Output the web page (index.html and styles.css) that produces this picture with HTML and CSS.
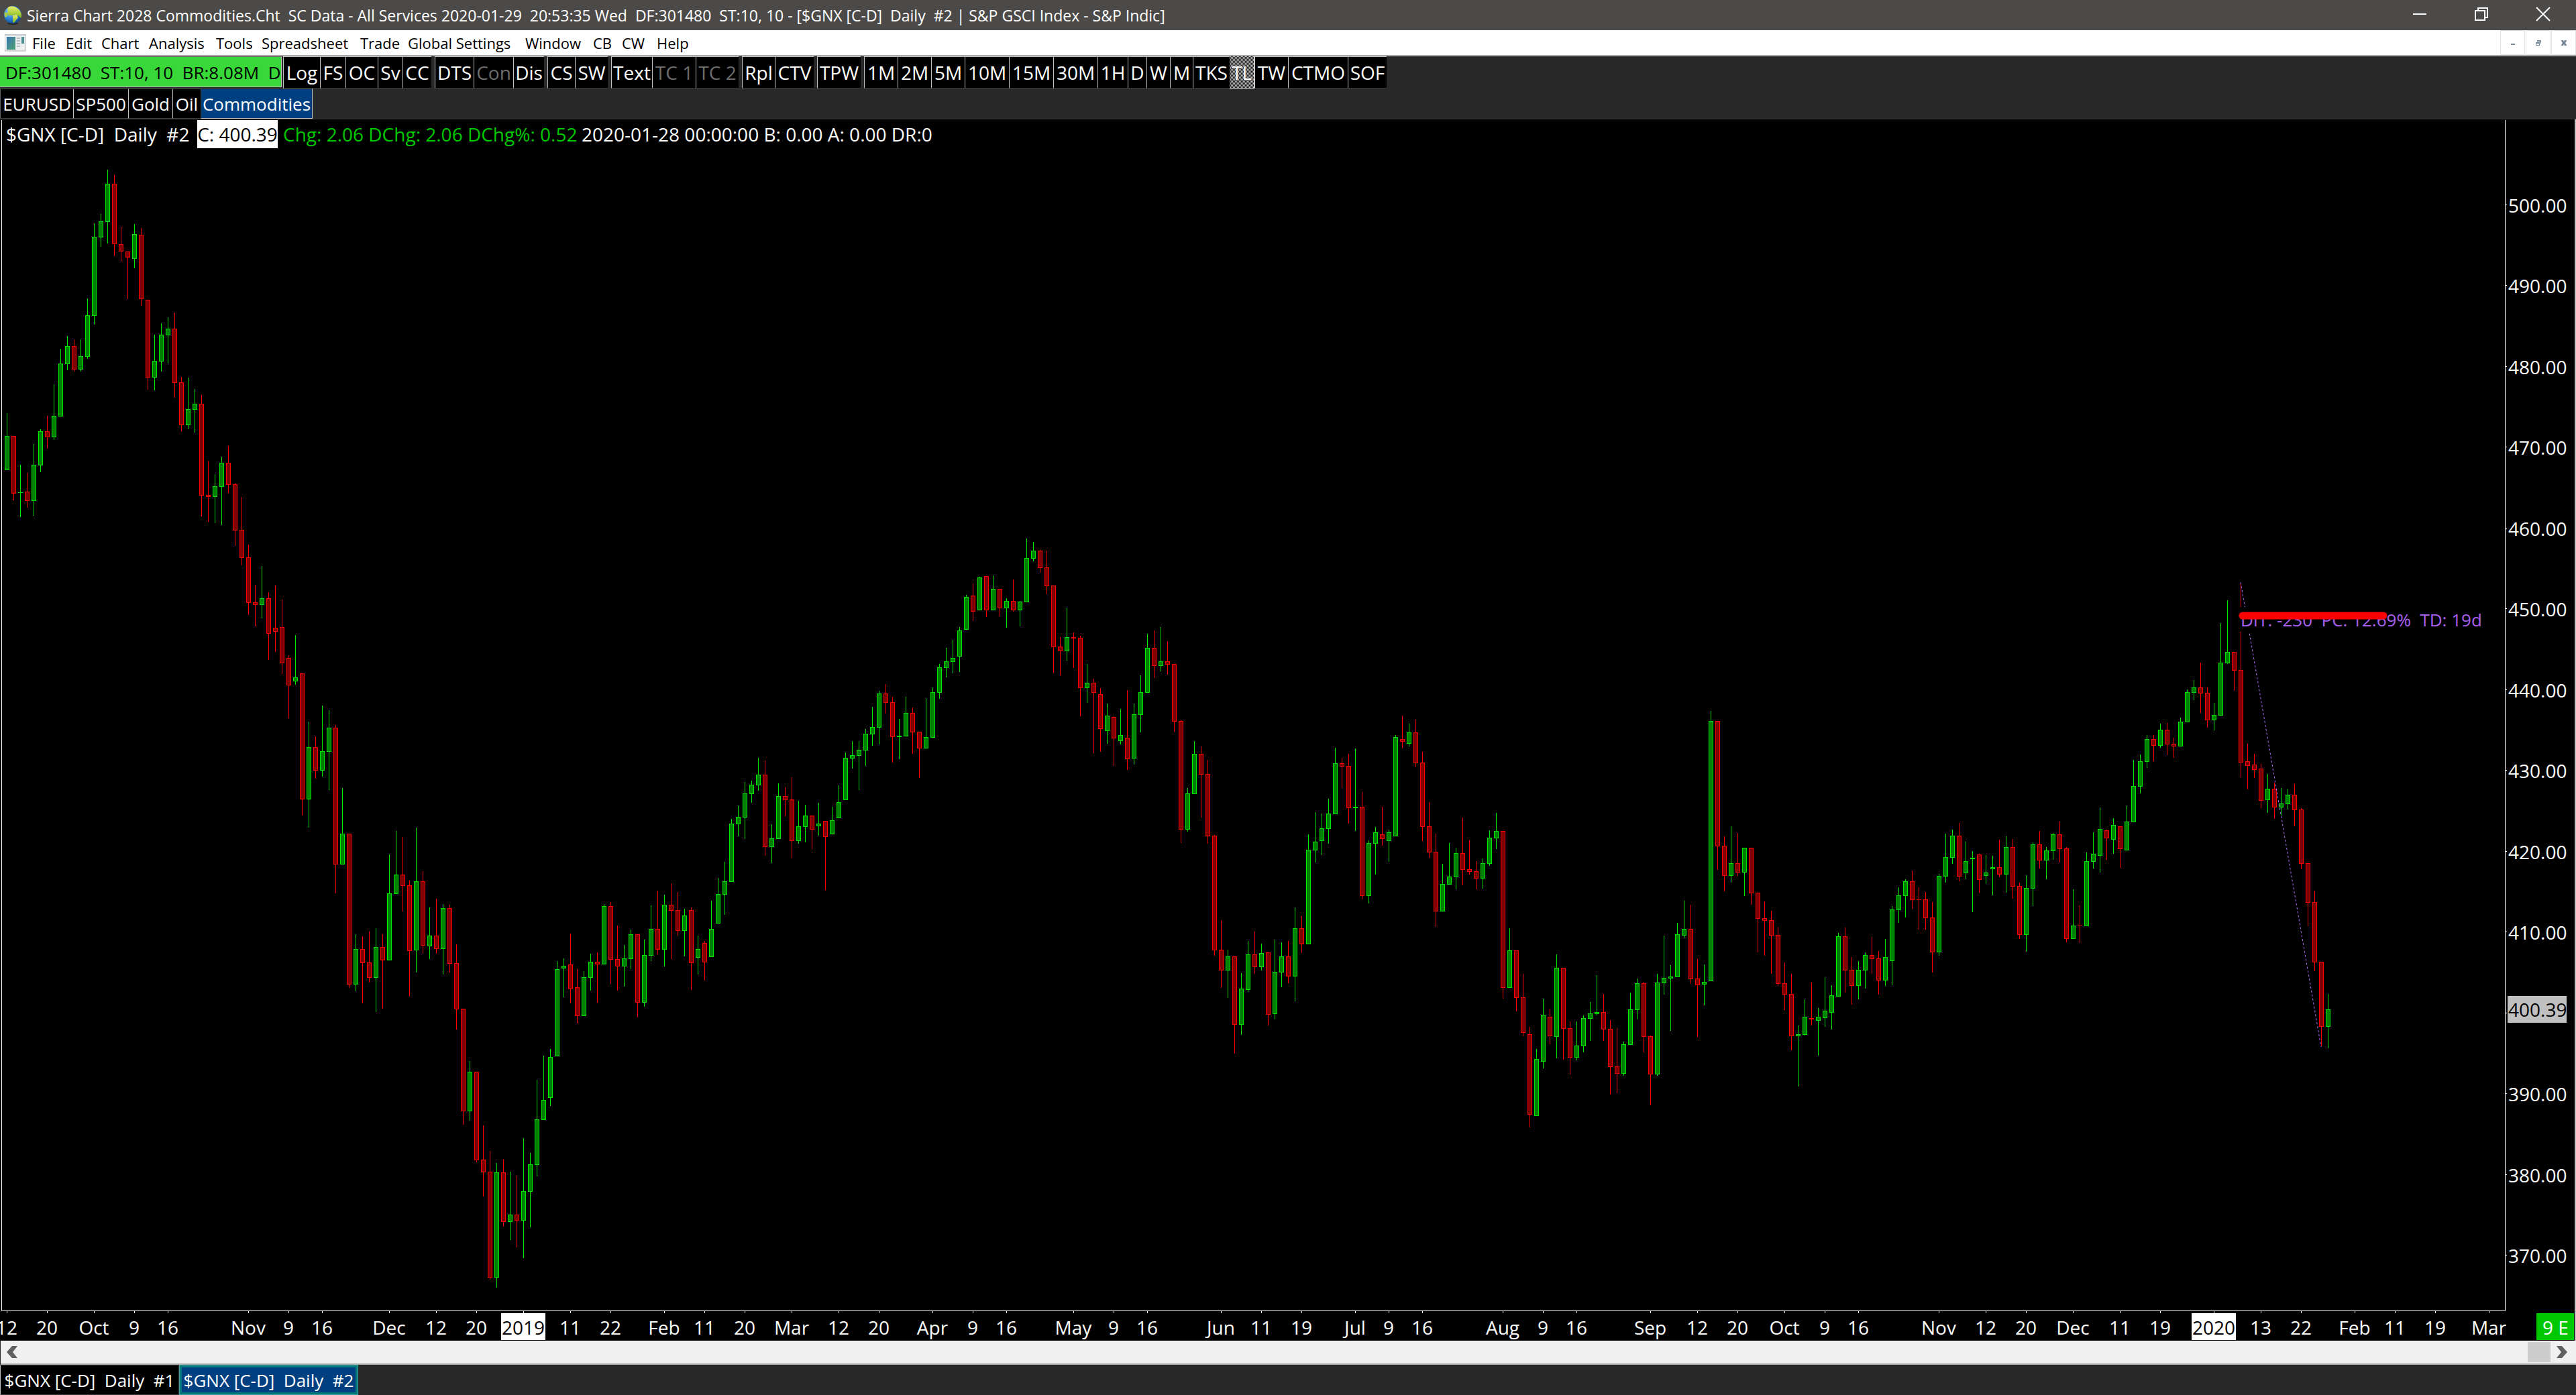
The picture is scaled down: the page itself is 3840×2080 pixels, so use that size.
FILE: index.html
```html
<!DOCTYPE html>
<html lang="en">
<head>
<meta charset="utf-8">
<title>Sierra Chart 2028 Commodities.Cht</title>
<link rel="stylesheet" href="styles.css">
</head>
<body>
<header class="titlebar">
  <svg class="globe" viewBox="0 0 28 30" aria-hidden="true">
    <defs>
      <radialGradient id="sea" cx="0.35" cy="0.3" r="0.8">
        <stop offset="0" stop-color="#9fd8ff"/><stop offset="0.5" stop-color="#2f86d8"/><stop offset="1" stop-color="#0b3f8c"/>
      </radialGradient>
      <linearGradient id="land" x1="0" y1="0" x2="0" y2="1">
        <stop offset="0" stop-color="#e8ef6a"/><stop offset="1" stop-color="#7cb51c"/>
      </linearGradient>
    </defs>
    <ellipse cx="14" cy="27" rx="8" ry="2" fill="#2c2a28"/>
    <circle cx="14" cy="14" r="13" fill="url(#sea)"/>
    <path d="M7 3c5-3 13-1 17 4 3 4 4 8 2 12l-4-4-2 1-3-2-4 1-6 0-2-3 2-3-1-3z" fill="url(#land)"/>
    <path d="M14 15l6-1 2 4-3 4-3 4-2-1 0-6z" fill="url(#land)"/>
    <path d="M2 10l3 1 1 5-3 2c-1-2-2-5-1-8z" fill="#a9cf3c"/>
  </svg>
  <h1 class="title">Sierra Chart 2028 Commodities.Cht  SC Data - All Services 2020-01-29  20:53:35 Wed  DF:301480  ST:10, 10 - [$GNX [C-D]  Daily  #2 | S&amp;P GSCI Index - S&amp;P Indic]</h1>
  <div class="window-controls">
    <button aria-label="Minimize"><svg viewBox="0 0 20 20"><path d="M0 10h20" /></svg></button>
    <button aria-label="Restore"><svg viewBox="0 0 20 20"><path d="M1 5h14v14H1zM5 5V1h14v14h-4" /></svg></button>
    <button aria-label="Close"><svg viewBox="0 0 20 20"><path d="M0 0l20 20M20 0L0 20" /></svg></button>
  </div>
</header>

<nav class="menubar">
  <svg class="doc-icon" viewBox="0 0 32 26" aria-hidden="true">
    <defs><linearGradient id="pane" x1="0" y1="0" x2="1" y2="1"><stop offset="0" stop-color="#3a78b4"/><stop offset="1" stop-color="#4fa070"/></linearGradient></defs>
    <path d="M0 0h31v25H0z" fill="#eceef0" stroke="#b0b4b8"/>
    <path d="M0 0h31v2H0z" fill="#c4c8d0"/>
    <path d="M3 4h13v19H3z" fill="url(#pane)"/>
    <path d="M18 6h5M18 10h5M18 14h5M18 18h5" stroke="#8a8e94"/>
    <path d="M25 4h4v10h-4z" fill="#4c8f90"/>
  </svg>
  <div class="menus">
    <button>File</button><button>Edit</button><button>Chart</button><button>Analysis</button><button>Tools</button><button>Spreadsheet</button><button>Trade</button><button>Global Settings</button><button>Window</button><button>CB</button><button>CW</button><button>Help</button>
  </div>
  <div class="mdi-controls">
    <button aria-label="Minimize chart"><svg viewBox="0 0 10 10"><path d="M2 6h6v2H2z"/></svg></button>
    <button aria-label="Restore chart"><svg viewBox="0 0 10 10"><path d="M3 1h6v5H8V3H3zM1 4h6v5H1zM2 6v2h4V6z" fill-rule="evenodd"/></svg></button>
    <button aria-label="Close chart"><svg viewBox="0 0 10 10"><path d="M1 1h3l1 2 1-2h3v1L7 5l2 3v1H6L5 7 4 9H1V8l2-3-2-3z"/></svg></button>
  </div>
</nav>

<section class="toolbars">
  <div class="bar bar-main">
    <div class="status">DF:301480  ST:10, 10  BR:8.08M  D</div><i></i>
    <button>Log</button><button>FS</button><button>OC</button><button>Sv</button><button>CC</button><i></i>
    <button>DTS</button><button disabled>Con</button><button>Dis</button><i></i>
    <button>CS</button><button>SW</button><i></i>
    <button>Text</button><button disabled>TC 1</button><button disabled>TC 2</button><i></i>
    <button>Rpl</button><button>CTV</button><i></i>
    <button>TPW</button><i></i>
    <button>1M</button><button>2M</button><button>5M</button><button>10M</button><button>15M</button><button>30M</button><button>1H</button><button>D</button><button>W</button><button>M</button><button>TKS</button><button class="pressed">TL</button><button>TW</button><button>CTMO</button><button>SOF</button>
  </div>
  <div class="bar bar-books">
    <button>EURUSD</button><button>SP500</button><button>Gold</button><button>Oil</button><button class="selected">Commodities</button>
  </div>
</section>

<main class="chart">
  <svg id="plot" class="plot" viewBox="0 178 3840 1821" role="img" aria-label="$GNX daily candlestick chart"></svg>
  <p class="readout"><span class="symbol">$GNX [C-D]  Daily  #2</span><span class="last">C: 400.39</span><span class="change">Chg: 2.06 DChg: 2.06 DChg%: 0.52</span><span>2020-01-28 00:00:00 B: 0.00 A: 0.00 DR:0</span></p>
</main>

<div class="scrollbar">
  <button aria-label="Scroll left"><svg viewBox="0 0 16 18"><path d="M8 0h8L9 9l7 9H8L0 9z"/></svg></button>
  <div class="thumb"></div>
  <button aria-label="Scroll right"><svg viewBox="0 0 16 18"><path d="M0 0h8l8 9-8 9H0l7-9z"/></svg></button>
</div>

<footer class="tabs">
  <button>$GNX [C-D]  Daily  #1</button><button class="current">$GNX [C-D]  Daily  #2</button>
</footer>
<script src="chart.js"></script>
</body>
</html>
```
FILE: styles.css
```css
* { box-sizing: border-box; }

body {
  margin: 0;
  background: #282828;
  color: #fff;
  font-family: "Open Sans", "Noto Sans", sans-serif;
  font-size: 28px;
}

button {
  margin: 0;
  padding: 0;
  border: 0;
  background: none;
  color: inherit;
  font: inherit;
  white-space: pre;
}

/* Title bar */
.titlebar {
  display: flex;
  align-items: center;
  height: 45px;
  padding: 0 3px 0 5px;
  background: #4c4a48;
}
.globe { width: 28px; height: 30px; }
.title {
  flex: 1;
  margin: 0 0 0 7px;
  font-size: 23px;
  font-weight: 400;
  line-height: 46px;
  white-space: pre;
}
.window-controls { display: flex; height: 42px; align-self: flex-start; }
.window-controls button { display: grid; place-items: center; width: 92px; }
.window-controls svg { width: 20px; height: 20px; fill: none; stroke: #fff; stroke-width: 2px; overflow: visible; }

/* Menu bar */
.menubar {
  display: flex;
  align-items: center;
  height: 39px;
  padding-left: 7px;
  background: #fff;
  border-bottom: 2px solid #a8a8a8;
  color: #000;
}
.doc-icon { width: 32px; height: 26px; }
.menus {
  display: grid;
  grid-template-columns: 50px 53px 71px 100px 68px 147px 71px 175px 101px 43px 52px 60px;
  flex: 1;
  margin-left: 9px;
  font-size: 22px;
  line-height: 38px;
}
.menus button { text-align: left; }
.mdi-controls { display: flex; gap: 1px; }
.mdi-controls button { display: grid; place-items: center; width: 37px; height: 37px; border: 1px solid #e2e2e2; }
.mdi-controls svg { width: 10px; height: 10px; fill: #74859a; }

/* Toolbars */
.toolbars { height: 94px; border-bottom: 1px solid #3a3a3a; }
.bar { display: grid; justify-content: start; }
.bar-main {
  grid-template-columns:
    420px 2px 55px 38px 48px 37px 43px 5px
    58px 59px 46px 5px 41px 49px 5px
    61px 65px 64px 5px 49px 58px 5px 65px 5px
    50px 50px 50px 66px 66px 66px 45px 28px 35px 34px 55px 37px 50px 89px 58px;
  height: 48px;
  line-height: 46px;
  font-size: 28px;
}
.bar button {
  overflow: hidden;
  background: #000;
  border-top: 1px solid #c0c0c0;
  border-left: 1px solid #c0c0c0;
  border-bottom: 1px solid #3a3a3a;
}
.bar button:disabled { color: #6c6c6c; }
.bar .pressed {
  background: repeating-conic-gradient(#c4c4c4 0 25%, #101010 0 50%) 0 0 / 2px 2px;
  border: 0;
  border-right: 1px solid #e0e0e0;
  border-bottom: 1px solid #e0e0e0;
}
.status {
  overflow: hidden;
  height: 46px;
  padding-left: 8px;
  border-top: 1px solid #606060;
  border-right: 1px solid #c0c0c0;
  border-bottom: 1px solid #c0c0c0;
  background: #38d838;
  color: #000;
  font-size: 26px;
  line-height: 46px;
  white-space: pre;
}
.bar-books {
  grid-template-columns: 109px 82px 66px 42px 167px;
  height: 45px;
  line-height: 44px;
  font-size: 26px;
}
.bar-books button { border-top-color: #505050; }
.bar-books button:first-child { border-left-color: #606060; }
.bar-books .selected {
  background: #004080;
  border-color: #404040;
  border-right: 1px solid #c0c0c0;
  border-bottom: 1px solid #c0c0c0;
}

/* Chart */
.chart { position: relative; background: #000; }
.plot { display: block; width: 100%; }
.plot text { fill: #fff; font-size: 28px; white-space: pre; }
.plot .dates text { text-anchor: middle; }
.plot .axis { stroke: #fff; fill: none; }
.plot .ticks { fill: #fff; }
.plot .up-line { fill: #00e400; }
.plot .up-body { fill: #008000; }
.plot .down-line { fill: #f00; }
.plot .down-body { fill: #800000; }
.plot .flag { fill: #fff; }
.plot .price-flag { fill: #c0c0c0; }
.plot .extra { fill: #00c800; }
.plot .dark { fill: #000; }
.plot .measure { stroke: #b070ff; stroke-dasharray: 3 3; }
.plot .measure-text { fill: #a860f0; font-size: 26px; }
.plot .redline { stroke: #f00; stroke-width: 11px; stroke-linecap: round; }

.readout {
  position: absolute;
  top: 1px;
  left: 9px;
  display: flex;
  margin: 0;
  line-height: 42px;
  white-space: pre;
}
.readout .symbol { width: 285px; }
.readout .last { width: 120px; margin-right: 8px; text-align: center; background: #fff; color: #000; }
.readout .change { width: 445px; color: #00c800; }

/* Scroll bar and chart tabs */
.scrollbar {
  display: flex;
  height: 36px;
  margin-left: 1px;
  padding: 1px 4px 2px 0;
  background: #f0f0f0;
  border-top: 1px solid #fff;
  border-bottom: 2px solid #a8a8a8;
}
.scrollbar button { display: grid; place-items: center; width: 34px; }
.scrollbar svg { width: 16px; height: 18px; fill: #606060; }
.thumb { width: 34px; margin-left: auto; background: #cdcdcd; }

.tabs { display: flex; height: 45px; font-size: 26px; line-height: 36px; }
.tabs button {
  width: 267px;
  background: #000;
  border: 1px solid #3a3a3a;
  border-left-color: #c0c0c0;
}
.tabs .current {
  background: #004080;
  border: 4px solid #007878;
  outline: 1px solid #40a0a0;
  outline-offset: -1px;
}
```
FILE: chart.js
```js
// Daily bars, oldest first. Each block is [top, scale, bars]; a bar is
// direction, high, body top, body bottom, low, measured down from the block top.
const BLOCKS = [
  [220, 1000 / 1568, `g 621 674 754 754,r 674 674 809 825,g 742 806 808 864,r 760 804 826 842,g 693 742 826 861,g 659 663 743 759,r 627 663 677 704,g 554 627 677 684,g 470 505 629 629,g 441 464 506 521,r 448 464 519 524,g 448 488 519 524,g 353 392 489 494,g 177 209 394 414,g 155 172 210 232,g 52 85 174 224,r 64 85 226 254,r 185 226 243 267,r 243 243 257 354,g 179 202 260 282,r 188 204 354 370,r 356 356 538 566,g 437 499 538 568,g 411 437 500 524,g 397 423 439 505,r 386 423 550 585,r 536 549 649 663,g 538 612 649 659,g 564 599 613 666,r 579 599 814 862,r 732 812 817 875,g 764 792 817 878,g 723 737 793 883,r 698 737 789 808,r 784 787 895 931,r 817 894 960 977,r 928 958 1065 1093,r 1022 1063 1069 1120,g 978 1054 1069 1101,r 1040 1054 1137 1198,r 1024 1123 1132 1179,r 1057 1121 1206 1231,r 1187 1193 1258 1334,g 1140 1239 1248 1256,r 1229 1229 1524 1562,g 1342 1402 1524 1590,r 1377 1402 1457 1475,g 1305 1411 1457 1471,g 1316 1356 1413 1502`],
  [1050, 890 / 1568, `r 55 62 421 497,g 220 340 421 421,r 340 340 737 745,g 604 643 737 754,r 610 643 680 786,r 597 678 719 731,g 588 638 719 809,r 604 638 673 800,g 395 497 673 673,g 333 447 499 499,r 349 447 477 544,r 463 476 648 768,g 324 465 647 705,r 439 465 634 655,g 534 608 636 669,r 511 608 643 655,g 525 536 643 710,r 527 536 682 705,r 631 680 802 854,r 800 800 1069 1105,g 937 965 1069 1094,r 965 965 1198 1203,r 1106 1196 1230 1293,r 1173 1228 1506 1512,g 1205 1230 1506 1533,r 1196 1230 1360 1372,g 1228 1341 1360 1408,r 1239 1341 1357 1427,g 1140 1279 1357 1455,g 1179 1209 1281 1374,g 987 1091 1210 1240,g 923 1039 1092 1092,g 906 927 1034 1055,g 675 696 925 925,g 668 687 694 770,r 603 684 749 786,r 696 743 819 839,g 701 717 819 819,g 655 677 719 752,r 652 677 684 784,g 525 530 684 684,r 520 530 671 735,r 581 669 689 752,g 632 668 689 742,g 592 604 669 696,r 604 604 784 823,g 618 659 784 795,g 529 590 661 675,r 490 590 645 657,g 500 527 645 689,r 470 527 543 669,r 493 541 595 608,g 537 555 595 662,r 534 541 680 751`],
  [790, 670 / 1568, `g 1416 1463 1494 1552,r 1435 1442 1510 1572,g 1294 1392 1491 1491,g 1215 1271 1374 1374,g 1158 1226 1274 1343,g 1009 1025 1229 1229,g 962 1002 1027 1070,g 880 920 1004 1079,g 875 889 922 953,g 796 854 892 910,r 805 854 1107 1137,g 1027 1077 1107 1163,g 885 929 1079 1079,r 899 929 943 999,r 864 941 1086 1147,g 945 1034 1086 1095,g 960 997 1037 1091,r 997 997 1046 1114,g 953 1025 1034 1067,r 1016 1016 1072 1257,g 967 1013 1062 1062,g 892 950 1006 1006,g 777 796 943 943,g 737 786 798 833,g 737 768 789 908,g 695 711 770 824,g 618 688 714 754,g 562 571 690 749,r 538 571 604 641,r 583 601 723 812,g 660 718 723 800,g 583 639 721 721,r 620 639 707 782,r 704 704 763 866,g 587 723 763 763,g 550 566 725 725,g 468 480 569 590,g 412 459 482 515,g 384 447 461 501,g 339 351 442 496,g 227 234 349 349,r 187 229 286 318,g 164 166 281 281,r 161 161 281 304,g 159 206 281 281,r 206 206 274 302,g 239 248 274 342,r 173 248 281 286,g 248 250 281 337,g 30 98 253 253,g 42 73 101 110,r 70 73 133 150,r 73 131 197 225,r 194 194 410 498`],
  [790, 820 / 1568, `r 306 333 346 415,g 222 306 346 373,r 293 306 310 394,r 302 308 451 532,g 382 436 451 493,r 425 436 465 637,r 451 468 568 633,g 495 530 574 610,r 532 534 595 673,g 511 585 602 612,r 457 593 654 685,g 495 526 652 669,g 415 463 528 577,g 296 337 465 465,r 287 337 388 423,g 277 375 388 403,r 317 375 384 413,r 382 382 547 576,r 543 545 855 893,g 736 751 855 860,g 602 639 753 753,r 618 639 698 820,r 656 696 874 895,r 870 872 1199 1214,r 1113 1197 1256 1306,g 1197 1216 1256 1335,r 1216 1216 1411 1493,g 1264 1308 1411 1440,g 1172 1210 1312 1318,r 1145 1210 1247 1266,g 1180 1207 1247 1256,r 1205 1205 1383 1413,g 1168 1260 1381 1396,g 1176 1216 1262 1304,r 1172 1216 1274 1293,g 1077 1136 1274 1344,r 1101 1136 1182 1207,g 868 912 1182 1182,g 805 889 914 948,g 809 851 887 927,g 767 809 853 895,g 621 665 811 811,r 650 665 675 736,r 639 673 794 838,g 623 790 794 859,r 748 790 1044 1054,g 885 893 1044 1065,g 847 862 895 983,r 790 868 882 901,g 855 862 887 947,g 585 591 874 874,r 530 597 604 621,g 553 577 610 618,r 541 577 665 677`],
  [1040, 660 / 1568, `r 192 230 459 508,r 371 456 549 568,r 482 546 758 813,g 589 660 758 758,g 516 634 663 663,g 532 551 637 679,r 425 551 611 665,r 506 608 618 627,r 580 615 641 679,g 570 587 641 677,g 470 497 589 596,g 409 473 499 537,r 473 473 1029 1067,g 817 896 1029 1029,r 896 896 1064 1112,r 979 1062 1188 1200,r 1166 1193 1478 1523,g 1245 1281 1482 1482,g 1067 1124 1290 1314,r 1102 1131 1200 1228,g 910 957 1202 1278,r 957 957 1174 1283,r 1147 1171 1276 1335,g 1147 1233 1276 1285,g 1126 1136 1235 1257,g 1079 1119 1138 1216,g 984 1114 1121 1126,r 1050 1114 1176 1216,r 1143 1174 1309 1406,r 1171 1307 1333 1402,g 1219 1228 1333 1340,g 1045 1105 1231 1231,g 995 1012 1107 1140,r 1007 1012 1202 1257,r 1197 1200 1335 1444,g 979 1010 1335 1340,g 843 993 1012 1052,g 948 988 995 1181,g 798 839 991 991,g 720 820 843 853,r 734 820 998 1014,r 927 995 1019 1202,g 946 1007 1017 1090,g 48 83 1005 1005,r 83 83 527 611,r 492 525 632 687,g 456 587 632 656,r 480 587 620 632,g 532 532 620 703,r 532 532 694 734,r 691 691 784 903,r 722 782 791 915,r 755 789 843 979,r 815 841 1014 1022,r 938 1012 1052 1107`],
  [1040, 600 / 1568, `r 1077 1155 1320 1375,g 1278 1312 1320 1516,g 1176 1244 1315 1317,r 1111 1249 1254 1278,g 1210 1244 1260 1396,g 1090 1220 1249 1283,g 1121 1160 1228 1294,g 917 930 1166 1166,r 896 930 1064 1150,r 1011 1061 1124 1197,g 1027 1061 1124 1176,g 993 1004 1064 1134,r 933 1004 1019 1077,r 988 1017 1103 1158,g 941 1011 1103 1124,g 813 826 1027 1121,g 740 771 828 878,g 708 716 774 857,r 674 716 789 823,r 740 787 789 904,r 758 787 860 904,r 797 857 993 1071,g 687 695 993 1006,g 531 622 698 721,g 515 538 625 648,r 489 538 698 716,g 562 638 685 708,g 598 625 630 836,r 612 612 711 760,g 614 682 695 727,g 617 661 669 771,r 554 661 690 700,g 541 583 690 760,r 551 583 737 784,r 721 734 925 941,g 693 742 925 990,g 564 572 745 813,r 520 572 635 666,g 583 596 635 708,g 528 533 598 632,r 483 533 591 643,r 583 588 941 954,g 747 889 941 941,r 810 889 891 956,g 604 638 891 891,g 525 609 640 666,g 429 512 617 682,r 515 517 549 632,g 470 497 554 609,r 502 502 591 664,g 421 483 596 596,g 243 345 486 486,g 222 248 348 374,g 146 162 251 274`],
  [820, 800 / 1568, `r 541 553 572 617,g 508 525 572 578,r 506 525 568 600,r 549 566 574 608,g 490 502 574 574,g 408 416 504 504,g 380 402 417 439,r 329 402 419 476,r 402 417 498 519,g 447 482 498 527,g 214 329 484 484,g 147 298 331 333,r 298 298 353 412,r 98 351 621 664,r 566 617 631 700,r 596 627 643 666,r 625 639 733 755,g 655 698 731 768,r 680 698 753 786,g 696 741 753 776,g 698 715 743 759,r 684 715 760 808,r 755 759 917 933,r 915 915 1031 1100,r 996 1029 1205 1231,r 1203 1203 1394 1450,g 1298 1343 1394 1456`]
];

const DATES = "12@10 20@70 Oct@140 9@200 16@250 Nov@370 9@430 16@480 Dec@580 12@650 20@710 2019@780 11@850 22@910 Feb@990 11@1050 20@1110 Mar@1180 12@1250 20@1310 Apr@1390 9@1450 16@1500 May@1600 9@1660 16@1710 Jun@1820 11@1880 19@1940 Jul@2020 9@2070 16@2120 Aug@2240 9@2300 16@2350 Sep@2460 12@2530 20@2590 Oct@2660 9@2720 16@2770 Nov@2890 12@2960 20@3020 Dec@3090 11@3160 19@3220 2020@3300 13@3370 22@3430 Feb@3510 11@3570 19@3630 Mar@3710";

const BAR_STEP = 10;
const rect = (cls, x, y, w, h) => `<rect class="${cls}" x="${x}" y="${y}" width="${w}" height="${h}"/>`;

function drawBars() {
  let x = 10;
  let out = "";
  for (const [top, scale, bars] of BLOCKS) {
    for (const bar of bars.split(",")) {
      const [dir, ...levels] = bar.split(" ");
      const [high, open, close, low] = levels.map(v => Math.round(top + v * scale));
      const kind = dir === "g" ? "up" : "down";
      const body = Math.max(close - open, 1);
      out += rect(`${kind}-line`, x, high, 1, low - high);
      out += rect(`${kind}-line`, x - 3, open, 7, body);
      if (body > 2) out += rect(`${kind}-body`, x - 2, open + 1, 5, body - 2);
      x += BAR_STEP;
    }
  }
  return out;
}

function drawPrices() {
  let out = "";
  for (let price = 500; price >= 370; price -= 10) {
    const y = Math.round(907 + (450 - price) * 12.05);
    out += rect("ticks", 3735, y, 2, 1);
    if (price !== 400) out += `<text x="3739" y="${y + 12}">${price}.00</text>`;
  }
  return out + rect("price-flag", 3738, 1485, 88, 40) + `<text class="dark" x="3739" y="1516">400.39</text>`;
}

function drawDates() {
  return DATES.split(" ").map(item => {
    const [label, x] = item.split("@");
    const year = label.length === 4;
    return rect("ticks", x, 1955, 1, 3) +
      (year ? rect("flag", x - 33, 1958, 66, 40) : "") +
      `<text${year ? ' class="dark"' : ""} x="${x}" y="1990">${label}</text>`;
  }).join("");
}

document.getElementById("plot").innerHTML = `
  <g shape-rendering="crispEdges">${drawBars()}</g>
  <path class="measure" d="M3340 868L3460 1561"/>
  ${rect("dark", 3339, 905, 364, 37)}
  <text class="measure-text" x="3340" y="934">DIT: -230  PC: 12.69%  TD: 19d</text>
  <path class="redline" d="M3343 918H3553"/>
  <path class="axis" d="M2.5 179V1954.500H3734.500V179"/>
  <g>${drawPrices()}</g>
  <g class="dates">${drawDates()}</g>
  ${rect("extra", 3781, 1958, 56, 40)}<text x="3790" y="1990">9 E</text>
  ${rect("price-flag", 3838, 178, 2, 1821)}`;
```
